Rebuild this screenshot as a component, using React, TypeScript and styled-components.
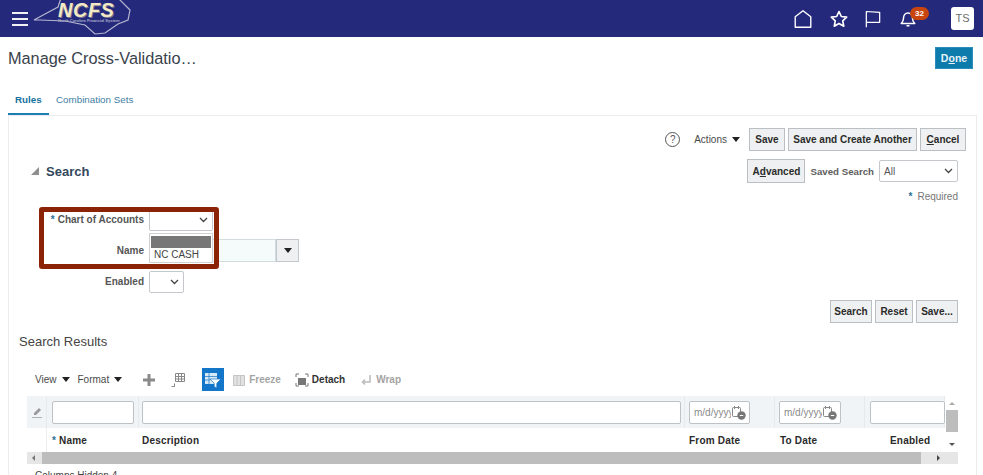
import styled, { createGlobalStyle } from "styled-components";
import type { ReactNode } from "react";

const GlobalStyle = createGlobalStyle`
  html, body {
    margin: 0;
    padding: 0;
    background: #fff;
    font-family: "Liberation Sans", Arial, sans-serif;
    color: #333;
  }
`;

const Page = styled.div`
  width: 983px;
  height: 475px;
  overflow: hidden;
  background: #fff;
`;

const TopBar = styled.header`
  height: 37px;
  background: #25297c;
  display: flex;
  align-items: center;
  padding: 0 9px 0 12px;
  overflow: hidden;
`;

const Burger = styled.div`
  width: 16px;
  display: flex;
  flex-direction: column;
  gap: 4px;
  margin-right: 5px;
  span {
    height: 2px;
    background: #f0f1f7;
  }
`;

const Logo = styled.div`
  position: relative;
  width: 100px;
  height: 37px;
`;

const LogoWord = styled.span`
  position: absolute;
  left: 25px;
  top: 2px;
  font: italic 700 20px/16px "Liberation Sans", sans-serif;
  letter-spacing: 0.5px;
  color: #f4e9c4;
  text-shadow: 1px 1px 0 #77778f;
`;

const LogoSub = styled.span`
  position: absolute;
  left: 25px;
  top: 19px;
  font: 700 4px/4px "Liberation Sans", sans-serif;
  color: #a9abc9;
  white-space: nowrap;
`;

const TopIcons = styled.div`
  margin-left: auto;
  display: flex;
  align-items: center;
`;

const TopIcon = styled.div<{ $gap: number }>`
  position: relative;
  display: flex;
  margin-right: ${({ $gap }) => $gap}px;
  color: #fff;
`;

const Badge = styled.span`
  position: absolute;
  left: 11px;
  top: -3px;
  width: 19px;
  height: 13px;
  border-radius: 7px;
  background: #c8450e;
  color: #fff;
  font-size: 8px;
  font-weight: 700;
  line-height: 13px;
  text-align: center;
`;

const Avatar = styled.div`
  width: 23px;
  height: 23px;
  border-radius: 3px;
  background: #fff;
  color: #6e6e6e;
  font-size: 11px;
  line-height: 23px;
  text-align: center;
`;

const TitleRow = styled.div`
  height: 46px;
  display: flex;
  align-items: center;
  justify-content: space-between;
  padding: 0 10px 0 8px;
`;

const PageTitle = styled.h1`
  margin: 0;
  font-size: 16.3px;
  font-weight: 400;
  color: #39424c;
  position: relative;
  top: -2px;
`;

const DoneButton = styled.button`
  width: 38px;
  height: 22px;
  padding: 0;
  border: 1px solid #2c8cb9;
  background: #0d7cad;
  color: #e9f3f8;
  font: 700 10.5px "Liberation Sans", sans-serif;
  position: relative;
  top: -2px;
`;

const Tabs = styled.nav`
  height: 32px;
  display: flex;
  padding-left: 8px;
  box-sizing: border-box;
`;

const Tab = styled.div<{ $active?: boolean }>`
  height: 32px;
  box-sizing: border-box;
  padding: 11px 8px 0 7px;
  width: ${({ $active }) => ($active ? "41px" : "auto")};
  font-size: 9.8px;
  font-weight: ${({ $active }) => ($active ? 700 : 400)};
  color: ${({ $active }) => ($active ? "#17719f" : "#3f7ea3")};
  border-bottom: ${({ $active }) => ($active ? "2px solid #1a7fb5" : "none")};
`;

const Panel = styled.main`
  position: relative;
  margin: 0 6px 0 8px;
  height: 360px;
  border: 1px solid #ededed;
  border-bottom: none;
  padding: 12px 18px 0 10px;
`;

const ActionRow = styled.div`
  display: flex;
  justify-content: flex-end;
  align-items: center;
  height: 23px;
  margin-right: -8px;
`;

const HelpIcon = styled.div`
  width: 13px;
  height: 13px;
  border: 1px solid #555;
  border-radius: 50%;
  font-size: 10px;
  line-height: 13px;
  text-align: center;
  color: #555;
  margin-right: 14px;
`;

const MenuLabel = styled.span<{ $gap?: number }>`
  display: inline-flex;
  align-items: center;
  gap: 5px;
  font-size: 10px;
  color: #4a4a4a;
  margin-right: ${({ $gap }) => $gap ?? 9}px;
  &::after {
    content: "";
    border-left: 4px solid transparent;
    border-right: 4px solid transparent;
    border-top: 5px solid #222;
  }
`;

const Btn = styled.button<{ $w: number; $h?: number; $gap?: number }>`
  width: ${({ $w }) => $w}px;
  height: ${({ $h }) => $h ?? 23}px;
  margin-left: ${({ $gap }) => $gap ?? 0}px;
  padding: 0;
  background: #eef0f1;
  border: 1px solid #b9bfc3;
  color: #2b2b2b;
  font: 700 10px "Liberation Sans", sans-serif;
  white-space: nowrap;
  flex: none;
  u {
    text-decoration: underline;
  }
`;

const SearchHead = styled.div`
  display: flex;
  align-items: center;
  height: 24px;
  margin-top: 8px;
`;

const Disclosure = styled.span`
  width: 0;
  height: 0;
  margin-left: 12px;
  border-bottom: 8px solid #8f8f8f;
  border-left: 8px solid transparent;
  margin-right: 7px;
`;

const SearchTitle = styled.h2`
  margin: 0;
  font-size: 13px;
  font-weight: 700;
  color: #33485c;
`;

const SavedBox = styled.div`
  margin-left: auto;
  display: flex;
  align-items: center;
`;

const SavedLabel = styled.span`
  margin: 0 5px 0 5px;
  font-size: 9.7px;
  font-weight: 700;
  color: #5e5e5e;
`;

const Select = styled.div<{ $w: number; $h?: number }>`
  width: ${({ $w }) => $w}px;
  height: ${({ $h }) => $h ?? 22}px;
  box-sizing: border-box;
  border: 1px solid #c4c8cc;
  border-radius: 2px;
  background: #fff;
  display: flex;
  align-items: center;
  justify-content: space-between;
  padding: 0 4px;
  font-size: 10px;
  color: #555;
  flex: none;
`;

const RequiredNote = styled.div`
  height: 14px;
  display: flex;
  justify-content: flex-end;
  gap: 5px;
  margin-top: 8px;
  font-size: 10px;
  color: #777;
  b {
    color: #2b6f96;
  }
`;

const FormGrid = styled.div`
  display: grid;
  grid-template-columns: 125px auto;
  grid-auto-rows: 23px;
  row-gap: 8px;
  margin-top: 3px;
  width: 290px;
  align-items: center;
  column-gap: 5px;
`;

const FormLabel = styled.label`
  font-size: 10px;
  font-weight: 700;
  color: #555;
  text-align: right;
  white-space: nowrap;
  b {
    color: #2b6f96;
    margin-right: 3px;
  }
`;

const Combo = styled.div`
  display: flex;
  width: 150px;
  height: 23px;
`;

const ComboInput = styled.div`
  flex: 1;
  border: 1px solid #d2dde0;
  background: #f5fbfb;
`;

const ComboButton = styled.div`
  width: 21px;
  border: 1px solid #c4c8cc;
  background: #eef0f1;
  display: flex;
  align-items: center;
  justify-content: center;
  &::after {
    content: "";
    border-left: 4px solid transparent;
    border-right: 4px solid transparent;
    border-top: 5px solid #222;
  }
`;

const SearchButtons = styled.div`
  display: flex;
  justify-content: flex-end;
  gap: 3px;
  margin-top: 7px;
`;

const ResultsTitle = styled.h3`
  margin: 9px 0 0;
  height: 20px;
  font-size: 13px;
  font-weight: 400;
  color: #444;
  line-height: 20px;
`;

const TableToolbar = styled.div`
  display: flex;
  align-items: center;
  height: 23px;
  margin: 16px 0 0 16px;
`;

const ToolIcon = styled.div<{ $gap: number; $on?: boolean }>`
  display: flex;
  align-items: center;
  justify-content: center;
  margin-left: ${({ $gap }) => $gap}px;
  ${({ $on }) => $on && "width: 22px; height: 23px; background: #1476c9;"}
`;

const ToolText = styled.span<{ $muted?: boolean }>`
  margin-left: 3px;
  font-size: 10px;
  font-weight: 700;
  color: ${({ $muted }) => ($muted ? "#a4a4a4" : "#333")};
`;

const TableWrap = styled.div`
  position: relative;
  margin: 5px 0 0 8px;
  width: 931px;
  display: grid;
  grid-template-columns: 918px 13px;
`;

const TableGrid = styled.div`
  overflow: hidden;
`;

const FilterRow = styled.div`
  height: 32px;
  background: #f1f4f6;
  display: flex;
`;

const FilterCell = styled.div<{ $w: number; $pad: number }>`
  width: ${({ $w }) => $w}px;
  box-sizing: border-box;
  padding-left: ${({ $pad }) => $pad}px;
  border-right: 1px solid #e6eaed;
  display: flex;
  align-items: center;
  flex: none;
`;

const FilterInput = styled.div<{ $w: number }>`
  width: ${({ $w }) => $w}px;
  height: 23px;
  box-sizing: border-box;
  border: 1px solid #bcc2c6;
  border-radius: 2px;
  background: #fff;
  display: flex;
  align-items: center;
  font-size: 10px;
  color: #8a8a8a;
  padding-left: 4px;
  overflow: hidden;
  white-space: nowrap;
  position: relative;
  flex: none;
`;

const CalendarIcon = styled.svg`
  position: absolute;
  right: 2px;
  top: 3px;
  background: #fff;
`;

const HeadRow = styled.div`
  height: 24px;
  display: flex;
  align-items: center;
  font-size: 10px;
  font-weight: 700;
  color: #2a2a2a;
  letter-spacing: 0.2px;
`;

const HeadCell = styled.div<{ $at: number; $pad?: number; $rule?: boolean }>`
  width: ${({ $at }) => $at}px;
  box-sizing: border-box;
  padding-left: ${({ $pad }) => $pad ?? 0}px;
  flex: none;
  white-space: nowrap;
  ${({ $rule }) => $rule && "height: 24px; border-right: 1px solid #eceef0;"}
  b {
    color: #2b6f96;
    margin-right: 3px;
  }
`;

const HScroll = styled.div`
  grid-column: 1 / span 2;
  height: 12px;
  background: #e6e6e6;
  display: flex;
  align-items: center;
`;

const ScrollThumb = styled.div`
  height: 12px;
  width: 879px;
  margin: 0 16px 0 7px;
  background: #bdbdbd;
`;

const Arrow = styled.span<{ $dir: "left" | "right" | "up" | "down" }>`
  width: 0;
  height: 0;
  display: block;
  flex: none;
  ${({ $dir }) =>
    $dir === "left"
      ? "margin-left: 5px; border-top: 3px solid transparent; border-bottom: 3px solid transparent; border-right: 3px solid #777;"
      : $dir === "right"
        ? "border-top: 3px solid transparent; border-bottom: 3px solid transparent; border-left: 3px solid #444;"
        : $dir === "up"
          ? "border-left: 3px solid transparent; border-right: 3px solid transparent; border-bottom: 3px solid #aaa;"
          : "border-left: 3px solid transparent; border-right: 3px solid transparent; border-top: 3px solid #555;"}
`;

const VScroll = styled.div`
  display: flex;
  flex-direction: column;
  align-items: center;
  padding-top: 6px;
  height: 56px;
  box-sizing: border-box;
  background: #fff;
`;

const VThumb = styled.div`
  width: 12px;
  height: 22px;
  margin: 5px 0 11px;
  background: #bdbdbd;
`;

const HiddenNote = styled.div`
  margin: 6px 0 0 16px;
  font-size: 10px;
  color: #444;
`;

const Highlight = styled.div`
  position: absolute;
  left: 30px;
  top: 91px;
  width: 170px;
  height: 52px;
  border: 5px solid #8b2407;
  border-radius: 3px;
`;

const DropList = styled.div`
  position: absolute;
  left: 140px;
  top: 117px;
  width: 64px;
  height: 30px;
  box-sizing: border-box;
  background: #fff;
  border: 1px solid #d0d0d0;
  padding: 2px 1px 0;
  font-size: 10px;
  color: #444;
  line-height: 13px;
`;

const DropSelected = styled.div`
  height: 12px;
  background: #777;
`;

const DropOption = styled.div`
  padding-left: 3px;
`;

const Chevron = () => (
  <svg width="9" height="6" viewBox="0 0 9 6" fill="none" stroke="#444" strokeWidth="1.3">
    <path d="M1 1l3.5 3.5L8 1" />
  </svg>
);

const Calendar = () => (
  <CalendarIcon width="16" height="16" viewBox="0 0 16 16" fill="none">
    <rect x="1.5" y="2.5" width="8" height="9" rx="1" stroke="#888" />
    <path d="M3.5 1v3M7.5 1v3" stroke="#888" />
    <circle cx="10.5" cy="10.5" r="4.2" fill="#777" />
    <path d="M8.8 10.5h3.4" stroke="#fff" />
  </CalendarIcon>
);

const StrokeIcon = ({ w, children }: { w: number; children: ReactNode }) => (
  <svg width={w} height={w} viewBox="0 0 24 24" fill="none" stroke="#fff" strokeWidth="1.5" strokeLinejoin="round">
    {children}
  </svg>
);

const NcOutline = () => (
  <svg
    width="100"
    height="37"
    viewBox="0 0 100 37"
    fill="none"
    stroke="#b5b7cf"
    strokeWidth="1.2"
    style={{ position: "absolute", left: 0, top: 0 }}
  >
    <path d="M1 20 L12 14 L25 7 L28 -2 L85 -2 L97 10 L95 20 L85 24 L72 33 L62 34 L52 25 L32 21 L7 20 Z" />
  </svg>
);

export default function App() {
  return (
    <Page>
      <GlobalStyle />
      <TopBar>
        <Burger>
          <span />
          <span />
          <span />
        </Burger>
        <Logo>
          <NcOutline />
          <LogoWord>NCFS</LogoWord>
          <LogoSub>North Carolina Financial System</LogoSub>
        </Logo>
        <TopIcons>
          <TopIcon $gap={15}>
            <StrokeIcon w={22}>
              <path d="M3.5 21V9.5L12 3l8.500 6.500V21z" />
            </StrokeIcon>
          </TopIcon>
          <TopIcon $gap={14}>
            <StrokeIcon w={20}>
              <path d="M12 3l2.800 6 6.400.8-4.700 4.400 1.200 6.400L12 17.400l-5.700 3.200 1.200-6.400L2.800 9.800 9.200 9z" strokeWidth="2" />
            </StrokeIcon>
          </TopIcon>
          <TopIcon $gap={16}>
            <StrokeIcon w={20}>
              <path d="M4 22V3l16 1v12H4" />
            </StrokeIcon>
          </TopIcon>
          <TopIcon $gap={34}>
            <StrokeIcon w={18}>
              <path d="M3 18c2-2 3-3 3-7 0-4 2.500-7 6-7s6 3 6 7c0 4 1 5 3 7zM10 21h4" strokeWidth="2" />
            </StrokeIcon>
            <Badge>32</Badge>
          </TopIcon>
          <Avatar>TS</Avatar>
        </TopIcons>
      </TopBar>

      <TitleRow>
        <PageTitle>Manage Cross-Validatio…</PageTitle>
        <DoneButton>
          D<u>o</u>ne
        </DoneButton>
      </TitleRow>

      <Tabs>
        <Tab $active>Rules</Tab>
        <Tab>Combination Sets</Tab>
      </Tabs>

      <Panel>
        <ActionRow>
          <HelpIcon>?</HelpIcon>
          <MenuLabel>Actions</MenuLabel>
          <Btn $w={36}>Save</Btn>
          <Btn $w={129} $gap={3}>Save and Create Another</Btn>
          <Btn $w={46} $gap={3}>
            <u>C</u>ancel
          </Btn>
        </ActionRow>

        <SearchHead>
          <Disclosure />
          <SearchTitle>Search</SearchTitle>
          <SavedBox>
            <Btn $w={58} $h={24}>
              A<u>d</u>vanced
            </Btn>
            <SavedLabel>Saved Search</SavedLabel>
            <Select $w={79}>
              All
              <Chevron />
            </Select>
          </SavedBox>
        </SearchHead>
        <RequiredNote>
          <b>*</b> Required
        </RequiredNote>

        <FormGrid>
          <FormLabel>
            <b>*</b>Chart of Accounts
          </FormLabel>
          <Select $w={64}>
            &nbsp;
            <Chevron />
          </Select>
          <FormLabel>Name</FormLabel>
          <Combo>
            <ComboInput />
            <ComboButton />
          </Combo>
          <FormLabel>Enabled</FormLabel>
          <Select $w={35}>
            &nbsp;
            <Chevron />
          </Select>
        </FormGrid>

        <SearchButtons>
          <Btn $w={42}>Search</Btn>
          <Btn $w={38}>Reset</Btn>
          <Btn $w={42}>Save...</Btn>
        </SearchButtons>

        <ResultsTitle>Search Results</ResultsTitle>

        <TableToolbar>
          <MenuLabel $gap={8}>View</MenuLabel>
          <MenuLabel $gap={0}>Format</MenuLabel>
          <ToolIcon $gap={20}>
            <svg width="14" height="14" viewBox="0 0 14 14">
              <path d="M5.500 1h3v4.500H13v3H8.500V13h-3V8.500H1v-3h4.500z" fill="#8a8a8a" />
            </svg>
          </ToolIcon>
          <ToolIcon $gap={14}>
            <svg width="16" height="16" viewBox="0 0 16 16" fill="none" stroke="#888">
              <path d="M5.500 1.500h9v8h-9zM5.500 4.500h9M8.500 1.500v8M11.500 1.500v8M5.500 7h9M1.500 14.500h3v-3" />
            </svg>
          </ToolIcon>
          <ToolIcon $gap={16} $on>
            <svg width="18" height="18" viewBox="0 0 18 18">
              <rect x="1" y="2" width="12" height="11" fill="#d7e8f6" />
              <path d="M1 5.500h12M1 9h5M5 2v11" stroke="#1476c9" strokeWidth="0.7" />
              <path d="M6 8h11l-4.200 4.200V17l-2.600-1.300v-3.500z" fill="#fff" stroke="#1476c9" strokeWidth="0.7" />
            </svg>
          </ToolIcon>
          <ToolIcon $gap={8}>
            <svg width="14" height="14" viewBox="0 0 14 14" fill="#e2e2e2" stroke="#c4c4c4">
              <path d="M1.500 2.500h11v10h-11zM5 2.500v10M8.500 2.500v10" />
            </svg>
          </ToolIcon>
          <ToolText $muted>Freeze</ToolText>
          <ToolIcon $gap={14}>
            <svg width="14" height="14" viewBox="0 0 14 14">
              <rect x="3" y="5" width="8" height="7" fill="#777" />
              <path d="M1 4V1h3M10 1h3v3M1 10v3h3M10 13h3v-3" fill="none" stroke="#777" />
            </svg>
          </ToolIcon>
          <ToolText>Detach</ToolText>
          <ToolIcon $gap={15}>
            <svg width="13" height="13" viewBox="0 0 13 13" fill="none" stroke="#bbb" strokeWidth="1.500">
              <path d="M10 2v7H3M5 6.500L2.500 9 5 11.500" />
            </svg>
          </ToolIcon>
          <ToolText $muted>Wrap</ToolText>
        </TableToolbar>

        <TableWrap>
          <TableGrid>
            <FilterRow>
              <FilterCell $w={20} $pad={4}>
                <svg width="12" height="12" viewBox="0 0 12 12" fill="#9a9a9a">
                  <path d="M3 7l5-5 2 2-5 5H3zM1 11h10v0.800H1z" />
                </svg>
              </FilterCell>
              <FilterCell $w={92} $pad={5}>
                <FilterInput $w={82} />
              </FilterCell>
              <FilterCell $w={546} $pad={3}>
                <FilterInput $w={539} />
              </FilterCell>
              <FilterCell $w={90} $pad={4}>
                <FilterInput $w={61}>
                  m/d/yyyy
                  <Calendar />
                </FilterInput>
              </FilterCell>
              <FilterCell $w={90} $pad={4}>
                <FilterInput $w={62}>
                  m/d/yyyy
                  <Calendar />
                </FilterInput>
              </FilterCell>
              <FilterCell $w={80} $pad={5}>
                <FilterInput $w={75} />
              </FilterCell>
            </FilterRow>
            <HeadRow>
              <HeadCell $at={20} $rule />
              <HeadCell $at={95} $pad={5}>
                <b>*</b>Name
              </HeadCell>
              <HeadCell $at={547}>Description</HeadCell>
              <HeadCell $at={91}>From Date</HeadCell>
              <HeadCell $at={110}>To Date</HeadCell>
              <HeadCell $at={50}>Enabled</HeadCell>
            </HeadRow>
          </TableGrid>
          <VScroll>
            <Arrow $dir="up" />
            <VThumb />
            <Arrow $dir="down" />
          </VScroll>
          <HScroll>
            <Arrow $dir="left" />
            <ScrollThumb />
            <Arrow $dir="right" />
          </HScroll>
        </TableWrap>
        <HiddenNote>Columns Hidden 4</HiddenNote>
        <Highlight />
        <DropList>
          <DropSelected />
          <DropOption>NC CASH</DropOption>
        </DropList>
      </Panel>
    </Page>
  );
}
